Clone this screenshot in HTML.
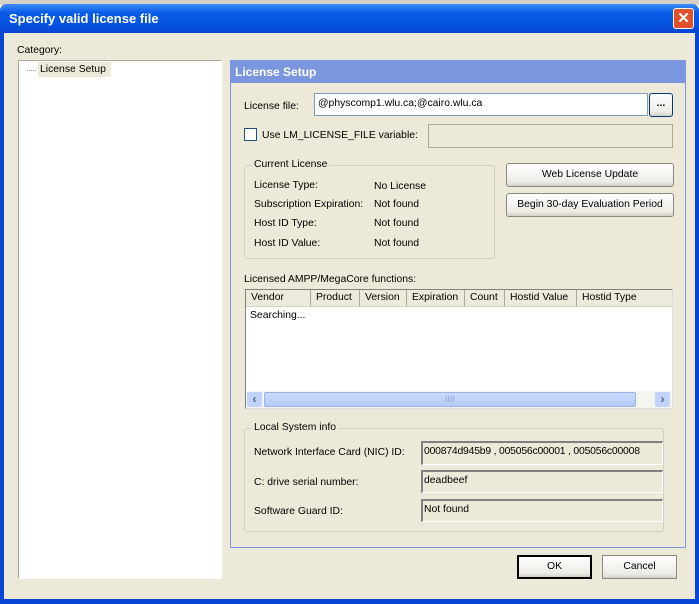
<!DOCTYPE html>
<html><head><style>
*{margin:0;padding:0;box-sizing:border-box}
body{width:699px;height:604px;overflow:hidden;background:#fff;font-family:"Liberation Sans",sans-serif;font-size:10.4px;color:#000;position:relative}
.a{position:absolute}
.t{position:absolute;white-space:nowrap;line-height:13px}
.btn{position:absolute;border:1px solid #003c74;border-radius:3px;text-align:center;line-height:22px;background:linear-gradient(#fff,#ecebe6 80%,#d6d0c5);white-space:nowrap}
.sunk{position:absolute;border:1px solid #7f9db9;background:#fff}
.grp{position:absolute;border:1px solid #d0d0bf;border-radius:3px}
.ro{position:absolute;background:#ece9d8;border-top:2px solid #808080;border-left:2px solid #808080;border-right:1px solid #fff;border-bottom:1px solid #fff;padding:2px 1px;line-height:14px;white-space:nowrap;overflow:hidden}
.hd{position:absolute;top:0;height:16px;border-right:1px solid #aca899;line-height:16px;padding-left:5px;background:#ebeadb;white-space:nowrap}
</style></head><body>
<div class="a" style="left:0;top:0;width:699px;height:5px;background:#d4d0c8"></div>
<div class="a" style="left:0;top:4px;width:699px;height:600px;background:#0846d8;border-radius:7px 7px 0 0"></div>
<div class="a" style="left:0;top:4px;width:699px;height:29px;background:linear-gradient(#3d8cf7,#0a5ce8 30%,#0552e0 70%,#0846d0);border-radius:7px 7px 0 0"></div>
<div class="t" style="left:9px;top:12px;color:#fff;font-weight:bold;font-size:13px">Specify valid license file</div>
<div class="a" style="left:673px;top:8px;width:21px;height:21px;background:#e0502a;border:1px solid #fff;border-radius:3px;color:#fff;font-weight:bold;font-size:15px;text-align:center;line-height:19px">✕</div>
<div class="a" style="left:4px;top:33px;width:691px;height:566px;background:#ece9d8"></div>
<div class="t" style="left:17px;top:44px">Category:</div>
<div class="a" style="left:18px;top:60px;width:204px;height:519px;background:#fff;border:1px solid;border-color:#aca899 #fff #fff #aca899"></div>
<div class="a" style="left:27px;top:70px;width:9px;border-top:1px dotted #999"></div>
<div class="a" style="left:38px;top:62px;width:73px;height:15px;background:#ece9d8"></div>
<div class="t" style="left:40px;top:63px">License Setup</div>
<div class="a" style="left:230px;top:60px;width:456px;height:488px;border:1px solid #7a96df"></div>
<div class="a" style="left:231px;top:61px;width:454px;height:22px;background:#7a96df"></div>
<div class="t" style="left:235px;top:66px;color:#fff;font-weight:bold;font-size:12px">License Setup</div>
<div class="t" style="left:244px;top:100px">License file:</div>
<div class="sunk" style="left:314px;top:93px;width:334px;height:23px"></div>
<div class="t" style="left:318px;top:97px">@physcomp1.wlu.ca;@cairo.wlu.ca</div>
<div class="btn" style="left:649px;top:93px;width:24px;height:24px;font-weight:bold;line-height:20px">...</div>
<div class="a" style="left:244px;top:128px;width:13px;height:13px;border:1px solid #1c5180;background:#fff"></div>
<div class="t" style="left:262px;top:129px">Use LM_LICENSE_FILE variable:</div>
<div class="a" style="left:428px;top:124px;width:245px;height:24px;border:1px solid #aca899;background:#ece9d8"></div>
<div class="grp" style="left:244px;top:165px;width:251px;height:94px"></div>
<div class="t" style="left:252px;top:158px;background:#ece9d8;padding:0 2px">Current License</div>
<div class="t" style="left:254px;top:179px">License Type:</div><div class="t" style="left:374px;top:180px">No License</div>
<div class="t" style="left:254px;top:198px">Subscription Expiration:</div><div class="t" style="left:374px;top:198px">Not found</div>
<div class="t" style="left:254px;top:217px">Host ID Type:</div><div class="t" style="left:374px;top:217px">Not found</div>
<div class="t" style="left:254px;top:237px">Host ID Value:</div><div class="t" style="left:374px;top:237px">Not found</div>
<div class="btn" style="left:506px;top:163px;width:168px;height:24px;border-color:#8c8a80">Web License Update</div>
<div class="btn" style="left:506px;top:193px;width:168px;height:24px;border-color:#8c8a80">Begin 30-day Evaluation Period</div>
<div class="t" style="left:244px;top:273px">Licensed AMPP/MegaCore functions:</div>
<div class="a" style="left:245px;top:289px;width:428px;height:120px;background:#fff;border:1px solid;border-color:#808080 #ddd #ddd #808080;overflow:hidden">
<div class="a" style="left:0;top:0;width:428px;height:17px;background:#ebeadb;border-bottom:1px solid #d6d2c2"></div>
<div class="hd" style="left:0;width:65px">Vendor</div>
<div class="hd" style="left:65px;width:49px">Product</div>
<div class="hd" style="left:114px;width:47px">Version</div>
<div class="hd" style="left:161px;width:58px">Expiration</div>
<div class="hd" style="left:219px;width:40px">Count</div>
<div class="hd" style="left:259px;width:72px">Hostid Value</div>
<div class="hd" style="left:331px;width:97px;border:none">Hostid Type</div>
<div class="t" style="left:4px;top:19px">Searching...</div>
<div class="a" style="left:0;top:101px;width:428px;height:17px;background:#f4f4f0"></div>
<div class="a" style="left:1px;top:102px;width:15px;height:15px;background:#c1d3fb;border-radius:2px;color:#4d6185;text-align:center;line-height:15px;font-weight:bold;font-size:12px">‹</div>
<div class="a" style="left:18px;top:102px;width:372px;height:15px;background:linear-gradient(#cadafc,#b5cbf7);border:1px solid #9bb3e6;border-radius:2px;text-align:center;color:#8ea7d9;line-height:13px;font-size:9px">IIII</div>
<div class="a" style="left:409px;top:102px;width:15px;height:15px;background:#c1d3fb;border-radius:2px;color:#4d6185;text-align:center;line-height:15px;font-weight:bold;font-size:12px">›</div>
</div>
<div class="grp" style="left:244px;top:428px;width:420px;height:104px"></div>
<div class="t" style="left:252px;top:421px;background:#ece9d8;padding:0 2px">Local System info</div>
<div class="t" style="left:254px;top:446px">Network Interface Card (NIC) ID:</div>
<div class="ro" style="left:421px;top:441px;width:242px;height:24px;letter-spacing:-0.2px">000874d945b9 , 005056c00001 , 005056c00008</div>
<div class="t" style="left:254px;top:476px">C: drive serial number:</div>
<div class="ro" style="left:421px;top:470px;width:242px;height:23px">deadbeef</div>
<div class="t" style="left:254px;top:505px">Software Guard ID:</div>
<div class="ro" style="left:421px;top:499px;width:242px;height:23px">Not found</div>
<div class="btn" style="left:517px;top:555px;width:75px;height:24px;border:2px solid #000;border-radius:0;line-height:20px">OK</div>
<div class="btn" style="left:602px;top:555px;width:75px;height:24px;border-color:#8c8a80;border-radius:0">Cancel</div>
</body></html>
